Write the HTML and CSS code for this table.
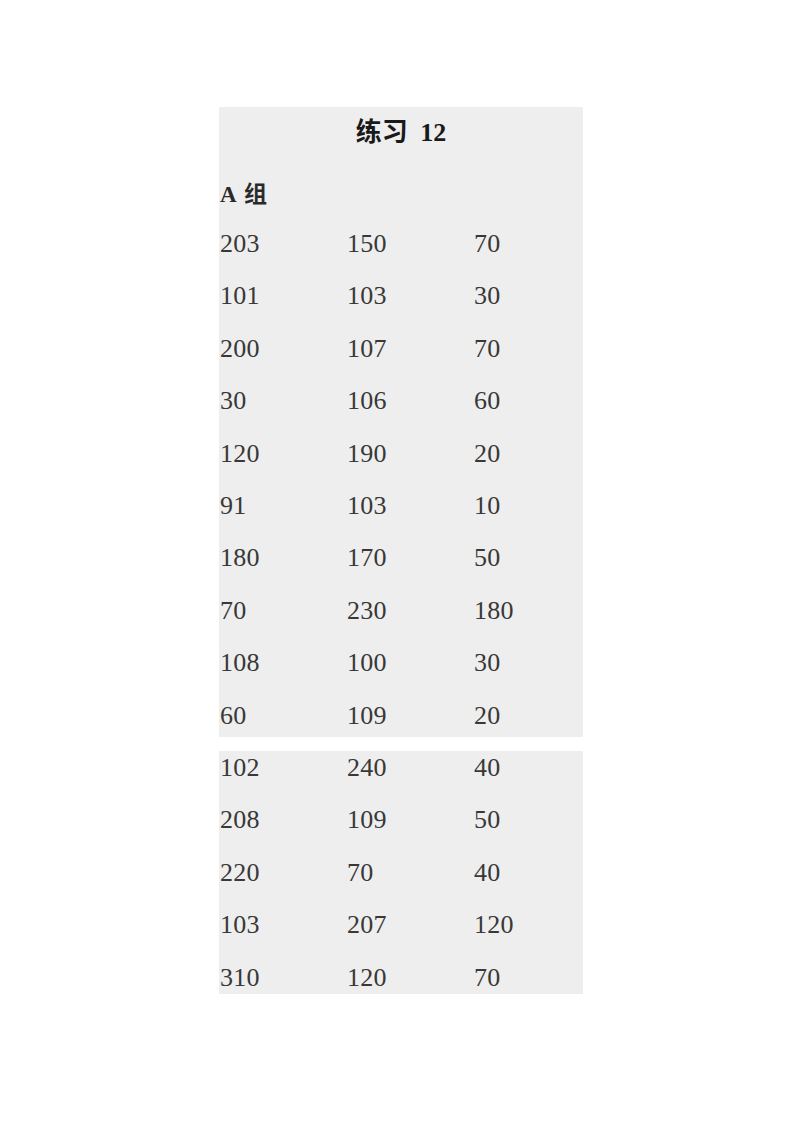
FILE: index.html
```html
<!DOCTYPE html>
<html lang="zh">
<head>
<meta charset="utf-8">
<title>练习 12</title>
<link rel="stylesheet" href="styles.css">
</head>
<body>
<main class="page">
  <section class="sheet sheet-a">
    <h1 class="title">练习 12</h1>
    <h2 class="group">A 组</h2>
    <div class="rows">
      <div class="row"><span>203</span><span>150</span><span>70</span></div>
      <div class="row"><span>101</span><span>103</span><span>30</span></div>
      <div class="row"><span>200</span><span>107</span><span>70</span></div>
      <div class="row"><span>30</span><span>106</span><span>60</span></div>
      <div class="row"><span>120</span><span>190</span><span>20</span></div>
      <div class="row"><span>91</span><span>103</span><span>10</span></div>
      <div class="row"><span>180</span><span>170</span><span>50</span></div>
      <div class="row"><span>70</span><span>230</span><span>180</span></div>
      <div class="row"><span>108</span><span>100</span><span>30</span></div>
      <div class="row"><span>60</span><span>109</span><span>20</span></div>
    </div>
  </section>
  <section class="sheet sheet-b">
    <div class="rows rows-b">
      <div class="row"><span>102</span><span>240</span><span>40</span></div>
      <div class="row"><span>208</span><span>109</span><span>50</span></div>
      <div class="row"><span>220</span><span>70</span><span>40</span></div>
      <div class="row"><span>103</span><span>207</span><span>120</span></div>
      <div class="row"><span>310</span><span>120</span><span>70</span></div>
    </div>
  </section>
</main>
</body>
</html>
```

FILE: styles.css
```css
html, body {
  margin: 0;
  padding: 0;
  background: #ffffff;
}

body {
  font-family: "Liberation Serif", "Noto Sans CJK SC", serif;
  color: #2a2a2a;
}

.page {
  width: 364px;
  margin: 0 0 0 219px;
  padding-top: 107px;
  display: flex;
  flex-direction: column;
  gap: 14px;
}

.sheet {
  background: #eeeeee;
  overflow: hidden;
}

.sheet-a {
  height: 630px;
}

.sheet-b {
  height: 243px;
}

.title {
  margin: 0;
  height: 52px;
  line-height: 52px;
  text-align: center;
  font-size: 26px;
  font-weight: bold;
  word-spacing: 6px;
  color: #1a1a1a;
  font-family: "Liberation Serif", "Noto Sans CJK SC", serif;
}

.group {
  margin: 13px 0 0 1px;
  height: 46px;
  line-height: 46px;
  font-size: 23px;
  font-weight: bold;
  color: #2a2a2a;
  word-spacing: 3px;
}

.rows {
  display: flex;
  flex-direction: column;
}

.rows-b {
  margin-top: -9px;
}

.row {
  display: grid;
  grid-template-columns: 127px 127px 1fr;
  height: 52.4px;
  line-height: 52.4px;
  font-size: 26px;
  color: #383838;
}

.row span {
  padding-left: 1px;
  letter-spacing: 0.3px;
}
```
